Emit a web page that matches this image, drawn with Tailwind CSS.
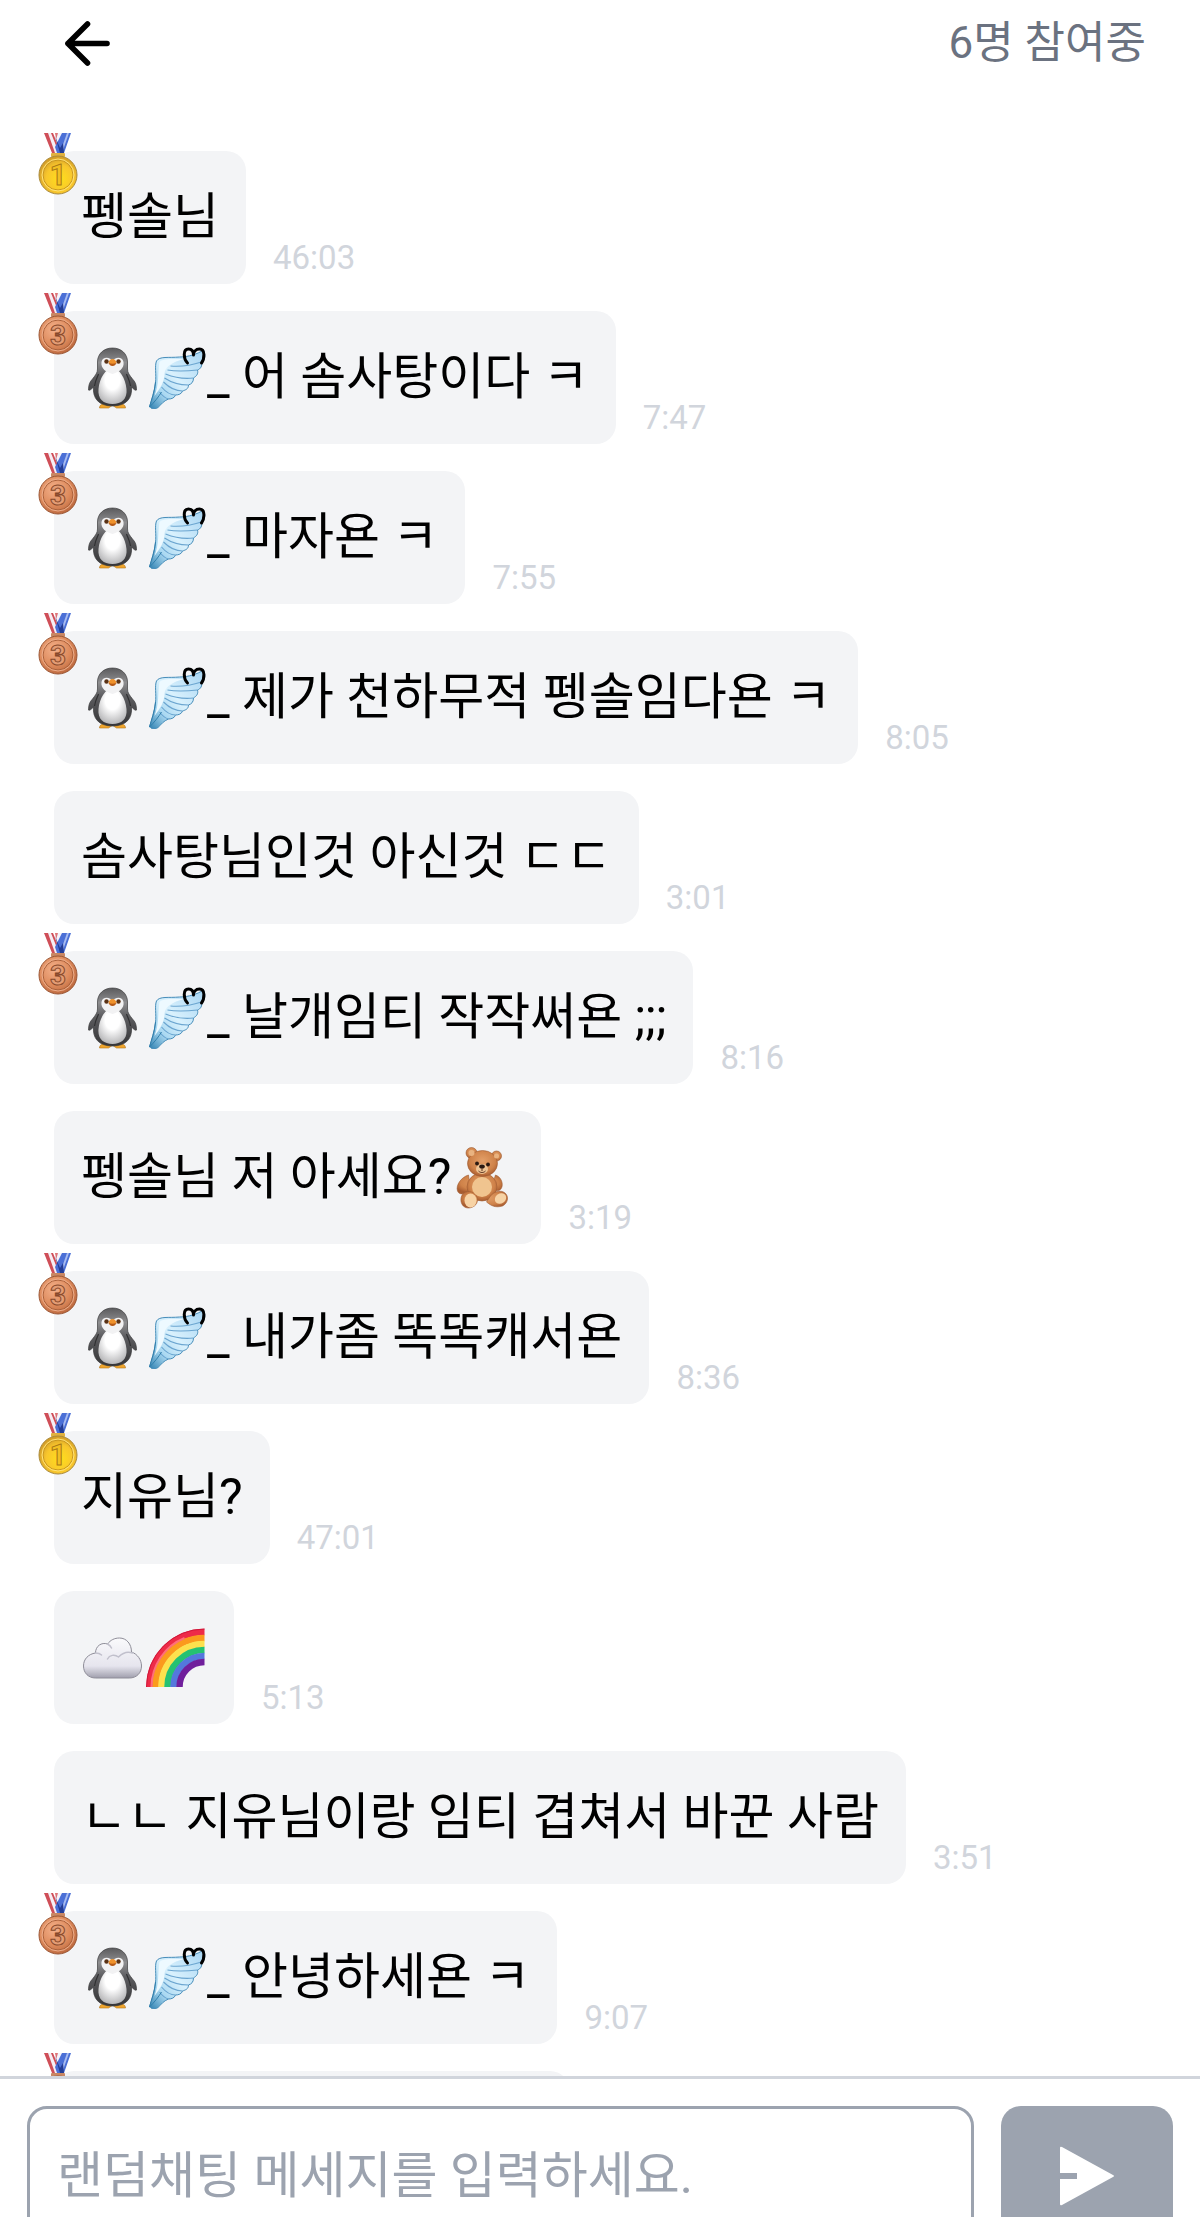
<!DOCTYPE html>
<html lang="ko">
  <head>
    <meta charset="UTF-8" />
    <meta name="viewport" content="width=device-width, initial-scale=1.0" />
    <title>랜덤채팅</title>
    <script src="https://cdn.jsdelivr.net/npm/@tailwindcss/browser@4"></script>
    <style>
      body {
        font-family: Roboto, 'Noto Sans CJK KR', sans-serif;
      }
    </style>
  </head>
  <body class="h-screen flex flex-col overflow-hidden bg-white text-black">
    <!-- Emoji -->
    <svg class="absolute w-0 h-0" aria-hidden="true">
      <defs>
        <radialGradient id="gold" cx=".55" cy=".6" r=".6">
          <stop offset="0" stop-color="#ffdf1c" />
          <stop offset=".6" stop-color="#f8c62c" />
          <stop offset="1" stop-color="#d09a28" />
        </radialGradient>
        <radialGradient id="bronze" cx=".4" cy=".35" r=".7">
          <stop offset="0" stop-color="#f3b08a" />
          <stop offset=".6" stop-color="#dd8a5c" />
          <stop offset="1" stop-color="#b9653b" />
        </radialGradient>
        <linearGradient id="penguin-coat" x1="0" y1="0" x2="0" y2="1">
          <stop offset="0" stop-color="#5b5b5d" />
          <stop offset=".25" stop-color="#8e8e90" />
          <stop offset=".5" stop-color="#5c5c5f" />
          <stop offset="1" stop-color="#363638" />
        </linearGradient>
        <radialGradient id="penguin-belly" cx=".5" cy=".35" r=".65">
          <stop offset=".4" stop-color="#fff" />
          <stop offset="1" stop-color="#b9b9bb" />
        </radialGradient>
        <linearGradient id="feather" x1="1" y1="0" x2="0" y2="1">
          <stop offset="0" stop-color="#a5d3f2" />
          <stop offset=".5" stop-color="#d9f1fd" />
          <stop offset=".75" stop-color="#a9d8f1" />
          <stop offset="1" stop-color="#2f80b0" />
        </linearGradient>
        <radialGradient id="fur" cx=".5" cy=".4" r=".6">
          <stop offset="0" stop-color="#e3a069" />
          <stop offset=".7" stop-color="#cf8249" />
          <stop offset="1" stop-color="#a85c30" />
        </radialGradient>
        <linearGradient id="vapor" x1="0" y1="0" x2="0" y2="1">
          <stop offset="0" stop-color="#fafafc" />
          <stop offset=".7" stop-color="#e6e5ee" />
          <stop offset="1" stop-color="#a09fad" />
        </linearGradient>

        <symbol id="ribbon" viewBox="0 0 40 62">
          <path d="M6 0h9l8 20h-9z" fill="#cf4e58" />
          <path d="M10 0h3l8 20h-4z" fill="#f6eef4" />
          <path d="M17 0h6l-4 10z" fill="#dc7378" />
          <path d="M20 0h5l-5 12-2-5z" fill="#f4f3fb" />
          <path d="M24 0h9l-7 20h-7l-2-6z" fill="#4a6fd6" />
          <path d="M29 0h2l-7 20h-2z" fill="#a9bcf0" />
          <path d="M17 3l5 12 3-5 1 10h-4z" fill="#233c95" />
        </symbol>
        <symbol id="medal-gold" viewBox="0 0 40 62">
          <use href="#ribbon" width="40" height="62" />
          <rect x="13" y="20" width="14" height="4" rx="1" fill="#e0b13f" />
          <circle cx="20" cy="42" r="19" fill="url(#gold)" stroke="#a98a3c" />
          <circle cx="20" cy="42" r="15" fill="none" stroke="#c79620" />
          <circle cx="20" cy="42" r="16" fill="none" stroke="#ffe37a" />
          <text x="20" y="52" text-anchor="middle" font-size="29" font-weight="700" fill="#f3bf22" stroke="#a97816">1</text>
        </symbol>
        <symbol id="medal-bronze" viewBox="0 0 40 62">
          <use href="#ribbon" width="40" height="62" />
          <rect x="13" y="20" width="14" height="4" rx="1" fill="#c88763" />
          <circle cx="20" cy="42" r="19" fill="url(#bronze)" stroke="#9a5533" />
          <circle cx="20" cy="42" r="15" fill="none" stroke="#a9603a" />
          <circle cx="20" cy="42" r="16" fill="none" stroke="#edae8c" />
          <text x="20" y="52" text-anchor="middle" font-size="28" font-weight="700" fill="#e39c74" stroke="#87482a">3</text>
        </symbol>

        <symbol id="penguin" viewBox="0 0 62 62">
          <path d="M18 61c0-3 3-5 7-5l5 3-3 2zM44 61c0-3-3-5-7-5l-5 3 3 2z" fill="#efa52d" stroke="#b67518" stroke-width=".6" />
          <path d="M31 1c-9 0-15 6-15 14v7c0 4-2 6-5 10-3 3-4 6-4 11 1 1 3-1 5-3-1 11 5 19 19 19s20-8 19-19c2 2 4 4 5 3 0-5-1-8-4-11-3-4-5-6-5-10v-7C46 7 40 1 31 1z" fill="url(#penguin-coat)" stroke="#3c3c3e" stroke-width=".7" />
          <path d="M31 20c-7 2-13 11-14 22-1 10 5 15 14 15s15-5 14-15c-1-11-7-20-14-22z" fill="url(#penguin-belly)" />
          <path d="M31 14c-2-4-10-5-11 1-1 7 5 10 11 12 6-2 12-5 11-12-1-6-9-5-11-1z" fill="#f2f2f3" />
          <path d="M13 39c1-6 3-9 4-12M49 39c-1-6-3-9-4-12" fill="none" stroke="#303032" stroke-width="1.2" />
          <circle cx="25" cy="14.500" r="2.200" fill="#5a3215" />
          <circle cx="37" cy="14.500" r="2.200" fill="#5a3215" />
          <path d="M31 12c2 0 4 2 4 4l-4 3-4-3c0-2 2-4 4-4z" fill="#ef922c" />
          <path d="M27 16c3 1 5 1 8 0-1 2-2 3-4 3s-3-1-4-3z" fill="#b65a18" />
        </symbol>
        <symbol id="wing" viewBox="0 0 62 62">
          <path d="M5 60c2-7 5-14 6-24 1-9-1-17 1-22 3-5 12-3 23-4 9 0 18-3 24-7 2 5 2 9-2 12 1 4-1 7-4 8 1 4-1 6-4 8 0 4-2 6-5 7 0 4-3 5-6 6-1 3-4 4-7 4-1 3-4 4-7 4-5 2-7 5-11 9-3 1-7 1-7-1z" fill="url(#feather)" stroke="#468db9" />
          <path d="M15 15c-2 12 0 21-5 34 6-8 10-14 10-23 1-6 7-11 20-14-10 0-22-1-25 3z" fill="#edf9ff" />
          <path d="M26 19c12 1 22-1 31-4M23 23c11 2 21 1 30 0M21 27c10 4 20 5 28 4M20 31c9 6 17 7 24 7M19 35c7 7 13 9 19 9M17 40c5 6 9 8 14 8M15 45c3 4 5 6 9 7" fill="none" stroke="#6ba5d0" stroke-width="1.100" />
          <path d="M11 35c-1 10-4 17-6 25 5-5 9-10 12-15" fill="none" stroke="#327fac" />
          <path d="M43 16C39 12 38 2 44 2c4 0 5 3 5 6 0-3 2-6 6-6 6 0 5 10 2 14" fill="none" stroke="#000" stroke-width="3" stroke-linecap="round" stroke-linejoin="round" />
        </symbol>
        <symbol id="bear" viewBox="0 0 62 62">
          <g fill="url(#fur)" stroke="#a05c33" stroke-width=".6">
            <circle cx="20" cy="6" r="5.500" />
            <circle cx="45" cy="9" r="5" />
            <path d="M17 28c-7 2-13 10-11 16 2 5 9 3 13-2zM44 28c6 2 8 9 6 13-2 4-7 3-10-1z" />
            <ellipse cx="30.500" cy="40" rx="15" ry="14" />
            <path d="M14 45c5-2 12 2 12 8 0 5-5 8-9 8-9 0-10-13-3-16zM39 49c3-4 9-6 13-4 6 3 5 11-1 14-7 2-11 0-16-4z" />
            <ellipse cx="31" cy="16.500" rx="15" ry="13" />
          </g>
          <circle cx="20" cy="6" r="3" fill="#e9b380" />
          <circle cx="45" cy="9" r="2.500" fill="#e9b380" />
          <ellipse cx="30.500" cy="40" rx="10" ry="10" fill="#f0c48f" />
          <ellipse cx="19" cy="53.500" rx="6" ry="7" fill="#f7d3a5" />
          <ellipse cx="49" cy="51.500" rx="6" ry="5" fill="#f7d3a5" transform="rotate(-35 49 51.500)" />
          <ellipse cx="30.500" cy="22" rx="6" ry="5" fill="#efc494" />
          <circle cx="25.500" cy="16.500" r="1.900" fill="#2b1a12" />
          <circle cx="36.500" cy="17.500" r="1.900" fill="#2b1a12" />
          <ellipse cx="30.500" cy="19.500" rx="2.800" ry="2" fill="#2b1a12" />
          <path d="M30.500 21v3m-3.500 0c2 2 5 2 7 0" fill="none" stroke="#5b3420" />
        </symbol>
        <symbol id="cloud" viewBox="0 0 62 62">
          <path d="M14 51C7 51 2 46 2 39c0-7 5-12 12-13 0-7 6-11 12-9 3-4 7-6 12-6 7 0 12 6 12 14 6 2 10 8 10 14 0 7-5 12-12 12z" fill="url(#vapor)" stroke="#8e8d98" />
          <path d="M26 32c2-4 7-5 11-2 4-4 9-6 14-4M26 17c2 1 3 2 4 4M14 26c3 0 5 1 6 2" fill="none" stroke="#c1c0cc" stroke-width="1.500" stroke-linecap="round" />
        </symbol>
        <symbol id="rainbow" viewBox="0 0 62 62">
          <g fill="none" stroke-width="6.500">
            <path d="M5 60A55 55 0 0 1 60 5" stroke="#ee2b48" />
            <path d="M11 60A49 49 0 0 1 60 11" stroke="#fb9a1d" />
            <path d="M17 60A43 43 0 0 1 60 17" stroke="#fde14e" />
            <path d="M23 60A37 37 0 0 1 60 23" stroke="#25c272" />
            <path d="M29 60A31 31 0 0 1 60 29" stroke="#5478dd" />
            <path d="M35 60A25 25 0 0 1 60 35" stroke="#701f9c" />
          </g>
          <path d="M2 60A58 58 0 0 1 60 2" fill="none" stroke="#cf173a" />
          <path d="M7 60A53 53 0 0 1 40 11" fill="none" stroke="#ff6f79" stroke-width="2" />
        </symbol>
      </defs>
    </svg>

    <!-- Header -->
    <header class="shrink-0 h-[86px] px-[54px] flex items-center justify-between">
      <button type="button" aria-label="뒤로">
        <svg class="block size-[67px]" viewBox="0 0 24 24" fill="none" stroke="currentColor" stroke-width="2" stroke-linecap="round" stroke-linejoin="round">
          <path d="M19 12H5M12 5l-7 7 7 7" />
        </svg>
      </button>
      <p class="text-[44px] leading-[64px] text-[#6b7280]">6명 참여중</p>
    </header>

    <!-- Messages -->
    <main class="flex-1 min-h-0 overflow-hidden pt-[65px] px-[54px]">
      <ul class="flex flex-col gap-[27px] text-[50px] leading-[79px] whitespace-nowrap">
        <li class="flex items-end gap-[27px]">
          <div class="relative flex items-center p-[27px] rounded-[20px] bg-gray-100">
            <svg class="absolute -left-4 -top-[18px] w-10 h-[62px]"><use href="#medal-gold" /></svg>
            <span>펭솔님</span>
          </div>
          <time class="text-[33px] leading-[53px] text-gray-300">46:03</time>
        </li>
        <li class="flex items-end gap-[27px]">
          <div class="relative flex items-center p-[27px] rounded-[20px] bg-gray-100">
            <svg class="absolute -left-4 -top-[18px] w-10 h-[62px]"><use href="#medal-bronze" /></svg>
            <svg class="w-[63px] h-[62px]"><use href="#penguin" /></svg>
            <svg class="w-[63px] h-[62px]"><use href="#wing" /></svg>
            <span>_ 어 솜사탕이다 ㅋ</span>
          </div>
          <time class="text-[33px] leading-[53px] text-gray-300">7:47</time>
        </li>
        <li class="flex items-end gap-[27px]">
          <div class="relative flex items-center p-[27px] rounded-[20px] bg-gray-100">
            <svg class="absolute -left-4 -top-[18px] w-10 h-[62px]"><use href="#medal-bronze" /></svg>
            <svg class="w-[63px] h-[62px]"><use href="#penguin" /></svg>
            <svg class="w-[63px] h-[62px]"><use href="#wing" /></svg>
            <span>_ 마자욘 ㅋ</span>
          </div>
          <time class="text-[33px] leading-[53px] text-gray-300">7:55</time>
        </li>
        <li class="flex items-end gap-[27px]">
          <div class="relative flex items-center p-[27px] rounded-[20px] bg-gray-100">
            <svg class="absolute -left-4 -top-[18px] w-10 h-[62px]"><use href="#medal-bronze" /></svg>
            <svg class="w-[63px] h-[62px]"><use href="#penguin" /></svg>
            <svg class="w-[63px] h-[62px]"><use href="#wing" /></svg>
            <span>_ 제가 천하무적 펭솔임다욘 ㅋ</span>
          </div>
          <time class="text-[33px] leading-[53px] text-gray-300">8:05</time>
        </li>
        <li class="flex items-end gap-[27px]">
          <div class="relative flex items-center p-[27px] rounded-[20px] bg-gray-100">
            <span>솜사탕님인것 아신것 ㄷㄷ</span>
          </div>
          <time class="text-[33px] leading-[53px] text-gray-300">3:01</time>
        </li>
        <li class="flex items-end gap-[27px]">
          <div class="relative flex items-center p-[27px] rounded-[20px] bg-gray-100">
            <svg class="absolute -left-4 -top-[18px] w-10 h-[62px]"><use href="#medal-bronze" /></svg>
            <svg class="w-[63px] h-[62px]"><use href="#penguin" /></svg>
            <svg class="w-[63px] h-[62px]"><use href="#wing" /></svg>
            <span>_ 날개임티 작작써욘 ;;;</span>
          </div>
          <time class="text-[33px] leading-[53px] text-gray-300">8:16</time>
        </li>
        <li class="flex items-end gap-[27px]">
          <div class="relative flex items-center p-[27px] rounded-[20px] bg-gray-100">
            <span>펭솔님 저 아세요?</span>
            <svg class="w-[63px] h-[62px]"><use href="#bear" /></svg>
          </div>
          <time class="text-[33px] leading-[53px] text-gray-300">3:19</time>
        </li>
        <li class="flex items-end gap-[27px]">
          <div class="relative flex items-center p-[27px] rounded-[20px] bg-gray-100">
            <svg class="absolute -left-4 -top-[18px] w-10 h-[62px]"><use href="#medal-bronze" /></svg>
            <svg class="w-[63px] h-[62px]"><use href="#penguin" /></svg>
            <svg class="w-[63px] h-[62px]"><use href="#wing" /></svg>
            <span>_ 내가좀 똑똑캐서욘</span>
          </div>
          <time class="text-[33px] leading-[53px] text-gray-300">8:36</time>
        </li>
        <li class="flex items-end gap-[27px]">
          <div class="relative flex items-center p-[27px] rounded-[20px] bg-gray-100">
            <svg class="absolute -left-4 -top-[18px] w-10 h-[62px]"><use href="#medal-gold" /></svg>
            <span>지유님?</span>
          </div>
          <time class="text-[33px] leading-[53px] text-gray-300">47:01</time>
        </li>
        <li class="flex items-end gap-[27px]">
          <div class="relative flex items-center h-[133px] p-[27px] rounded-[20px] bg-gray-100">
            <svg class="w-[63px] h-[62px]"><use href="#cloud" /></svg>
            <svg class="w-[63px] h-[62px]"><use href="#rainbow" /></svg>
          </div>
          <time class="text-[33px] leading-[53px] text-gray-300">5:13</time>
        </li>
        <li class="flex items-end gap-[27px]">
          <div class="relative flex items-center p-[27px] rounded-[20px] bg-gray-100">
            <span>ㄴㄴ 지유님이랑 임티 겹쳐서 바꾼 사람</span>
          </div>
          <time class="text-[33px] leading-[53px] text-gray-300">3:51</time>
        </li>
        <li class="flex items-end gap-[27px]">
          <div class="relative flex items-center p-[27px] rounded-[20px] bg-gray-100">
            <svg class="absolute -left-4 -top-[18px] w-10 h-[62px]"><use href="#medal-bronze" /></svg>
            <svg class="w-[63px] h-[62px]"><use href="#penguin" /></svg>
            <svg class="w-[63px] h-[62px]"><use href="#wing" /></svg>
            <span>_ 안녕하세욘 ㅋ</span>
          </div>
          <time class="text-[33px] leading-[53px] text-gray-300">9:07</time>
        </li>
        <li class="flex items-end">
          <div class="relative w-[516px] h-[133px] rounded-[20px] bg-gray-100">
            <svg class="absolute -left-4 -top-[18px] w-10 h-[62px]"><use href="#medal-bronze" /></svg>
          </div>
        </li>
      </ul>
    </main>

    <!-- Message form -->
    <footer class="shrink-0 h-[141px] overflow-hidden border-t-3 border-gray-300">
      <form class="flex gap-[27px] p-[27px]">
        <input
          type="text"
          aria-label="메세지"
          placeholder="랜덤채팅 메세지를 입력하세요."
          class="flex-1 min-w-0 h-[140px] px-[27px] text-[50px] rounded-[20px] border-3 border-[#9ca3af] placeholder:text-[#9ca3af] focus:outline-none"
        />
        <button type="button" aria-label="보내기" class="w-[172px] h-[140px] flex items-center justify-center rounded-[20px] bg-[#9ca3af]">
          <svg class="w-14 h-[60px]" viewBox="0 0 56 60" fill="#fff">
            <path d="M1 2q0-2 2-1l51 28q2 1 0 2L3 59q-2 1-2-1V33h17v-6H1z" />
          </svg>
        </button>
      </form>
    </footer>
  </body>
</html>
